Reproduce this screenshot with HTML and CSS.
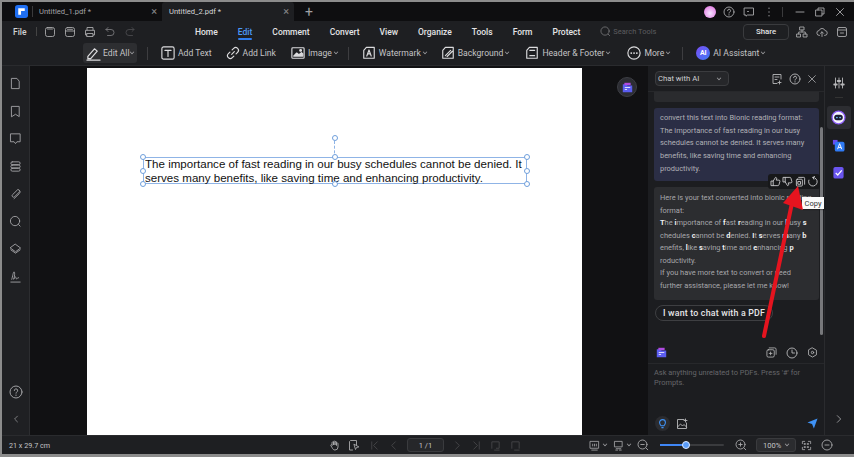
FILE: index.html
```html
<!DOCTYPE html>
<html lang="en">
<head>
<meta charset="utf-8">
<title>PDFelement</title>
<link rel="stylesheet" href="styles.css">
</head>
<body>
<div class="window">
  <header class="tabbar">
    <div class="logo"><svg viewBox="0 0 14 14" width="13" height="13"><rect width="14" height="14" rx="3" fill="#1f6ff2"/><path d="M3.5 3.5h7v3h-4v4h-3z" fill="#fff"/></svg></div>
    <div class="tab"><span class="tab-sep"></span><span class="tab-name">Untitled_1.pdf *</span><span class="tab-x">×</span></div>
    <div class="tab active"><span class="tab-name">Untitled_2.pdf *</span><span class="tab-x">×</span></div>
    <span class="plus">+</span>
    <div class="tab-right">
      <span class="avatar"></span>
      <svg class="ic" viewBox="0 0 12 12" width="12" height="12"><circle cx="6" cy="6" r="5"/><path d="M4.600 4.700a1.500 1.500 0 1 1 2 1.400c-.5.200-.6.500-.6 1M6 8.600v.5"/></svg>
      <svg class="ic" viewBox="0 0 12 12" width="12" height="12"><path d="M1.500 2h9v7h-6l-1.500 1.200V9h-1.500z"/><path d="M4.500 5.500h1"/></svg>
      <svg class="ic" viewBox="0 0 12 12" width="12" height="12"><path d="M6 2v.6M6 5.700v.6M6 9.400v.6"/></svg>
      <span class="win-sep"></span>
      <svg class="ic" viewBox="0 0 12 12" width="12" height="12"><path d="M2 6h8"/></svg>
      <svg class="ic" viewBox="0 0 12 12" width="12" height="12"><path d="M2 4h6v6H2zM4 4V2h6v6H8"/></svg>
      <svg class="ic" viewBox="0 0 12 12" width="12" height="12"><path d="M2.500 2.500l7 7M9.500 2.500l-7 7"/></svg>
    </div>
  </header>

  <nav class="menubar">
    <span class="file">File</span>
    <span class="menu-sep"></span>
    <div class="quick">
      <svg class="ic" viewBox="0 0 12 12" width="12" height="12"><rect x="1.500" y="1.500" width="9" height="9" rx="2"/><path d="M3.500 3h5"/></svg>
      <svg class="ic" viewBox="0 0 12 12" width="12" height="12"><rect x="1.500" y="1.500" width="9" height="9" rx="2"/><path d="M1.500 5h9" /><path d="M3.500 3.300h5" /></svg>
      <svg class="ic" viewBox="0 0 12 12" width="12" height="12"><path d="M3 4V1.500h6V4M3 9H1.500V4.300h9V9H9M3 7.500h6v3H3z"/></svg>
      <svg class="ic dim" viewBox="0 0 12 12" width="12" height="12"><path d="M4 1.500L2 3.500l2 2M2 3.500h5a2.800 2.800 0 0 1 0 6H3.500"/></svg>
      <svg class="ic dimmer" viewBox="0 0 12 12" width="12" height="12"><path d="M8 1.500l2 2-2 2M10 3.500H5a2.800 2.800 0 0 0 0 6h3.500"/></svg>
    </div>
    <div class="menu">
      <span>Home</span><span class="current">Edit</span><span>Comment</span><span>Convert</span><span>View</span><span>Organize</span><span>Tools</span><span>Form</span><span>Protect</span>
    </div>
    <div class="search"><svg class="ic dim" viewBox="0 0 12 12" width="11" height="11"><circle cx="5.500" cy="5.500" r="4.500"/><path d="M9 9l1.500 1.500"/></svg><span>Search Tools</span></div>
    <div class="menu-right">
      <span class="share">Share</span>
      <svg class="ic" viewBox="0 0 12 12" width="12" height="12"><rect x="4" y="1" width="4" height="3"/><rect x="1" y="8" width="3.500" height="3"/><rect x="7.500" y="8" width="3.500" height="3"/><path d="M6 4v2M2.700 8V6h6.600v2"/></svg>
      <svg class="ic" viewBox="0 0 12 12" width="12" height="12"><path d="M3.500 9.500a2.500 2.500 0 0 1-.3-5 3 3 0 0 1 5.700 0 2.500 2.500 0 0 1-.3 5M6 10.500V6M4.500 7.300L6 5.800l1.500 1.500"/></svg>
      <svg class="ic" viewBox="0 0 12 12" width="12" height="12"><rect x="1.500" y="1.500" width="9" height="9" rx="1.500"/><path d="M1.500 4h9M4.500 7h3"/></svg>
    </div>
  </nav>

  <div class="toolbar">
    <div class="tool editall">
      <svg class="tic" viewBox="0 0 16 16" width="15" height="15"><path d="M2 11l7-8 3 2.500-7 8H2zM1 15h14"/></svg>
      <span>Edit All</span><i class="caret"></i>
    </div>
    <span class="tsep s1"></span>
    <div class="tool t-text">
      <svg class="tic" viewBox="0 0 16 16" width="14" height="14"><rect x="1" y="1" width="14" height="14" rx="2"/><path d="M4.500 5h7M8 5v7"/></svg>
      <span>Add Text</span>
    </div>
    <div class="tool t-link">
      <svg class="tic" viewBox="0 0 16 16" width="14" height="14"><path d="M6.500 9.500l3-3M7 4.500l1.800-1.800a3 3 0 0 1 4.500 4.500L11.500 9M9 11.500l-1.800 1.800a3 3 0 0 1-4.500-4.500L4.500 7"/></svg>
      <span>Add Link</span>
    </div>
    <div class="tool t-img">
      <svg class="tic" viewBox="0 0 16 16" width="14" height="14"><rect x="1" y="2" width="14" height="12" rx="1"/><path d="M3 11.500l3.500-3.500 2.500 2 3-2.500 1.500 1.500v2.500z" fill="#d8d8da"/><circle cx="11" cy="5" r="1" fill="#d8d8da"/></svg>
      <span>Image</span><i class="caret"></i>
    </div>
    <span class="tsep s2"></span>
    <div class="tool t-wm">
      <svg class="tic" viewBox="0 0 16 16" width="14" height="14"><path d="M2 14V5l3-3.500h9V14zM5.500 11.500l2.500-7 2.500 7M6.500 9h3"/></svg>
      <span>Watermark</span><i class="caret"></i>
    </div>
    <div class="tool t-bg">
      <svg class="tic" viewBox="0 0 16 16" width="14" height="14"><path d="M2 14V5l3-3.500h9V14zM5 11l6-6M7 12l6-6"/></svg>
      <span>Background</span><i class="caret"></i>
    </div>
    <div class="tool t-hf">
      <svg class="tic" viewBox="0 0 16 16" width="14" height="14"><path d="M2 14V5l3-3.500h9V14zM5.500 5h5.500M5.500 11h5.500"/></svg>
      <span>Header &amp; Footer</span><i class="caret"></i>
    </div>
    <div class="tool t-more">
      <svg class="tic" viewBox="0 0 16 16" width="14" height="14"><circle cx="8" cy="8" r="7"/><path d="M4.800 8h.1M8 8h.1M11.200 8h.1" stroke-width="2"/></svg>
      <span>More</span><i class="caret"></i>
    </div>
    <span class="tsep s3"></span>
    <div class="tool t-ai">
      <span class="ai-badge">AI</span>
      <span>AI Assistant</span><i class="caret"></i>
    </div>
  </div>

  <main class="main">
    <aside class="sidebar">
      <div class="side-top">
        <svg class="sic" viewBox="0 0 14 14" width="13" height="13"><path d="M3 1.500h5.500l2.500 3v8H3z"/></svg>
        <svg class="sic" viewBox="0 0 14 14" width="13" height="13"><path d="M3 1.500h8v11l-4-2.500-4 2.500z"/></svg>
        <svg class="sic" viewBox="0 0 14 14" width="13" height="13"><path d="M2 2h10v8.500H8.500L7 12.500 5.500 10.500H2z"/></svg>
        <svg class="sic" viewBox="0 0 14 14" width="13" height="13"><rect x="2" y="2" width="10" height="3" rx="1.500"/><rect x="2" y="5.500" width="10" height="3" rx="1.500"/><rect x="2" y="9" width="10" height="3" rx="1.500"/></svg>
        <svg class="sic" viewBox="0 0 14 14" width="13" height="13"><path d="M11.500 5L6 10.500a1.500 1.500 0 0 1-2.200-2.200L9.500 2.700a2.600 2.600 0 0 1 1.500 4.500L5.500 12.500"/></svg>
        <svg class="sic" viewBox="0 0 14 14" width="13" height="13"><circle cx="6.500" cy="6.500" r="5"/><path d="M10.300 10.300l1.700 1.700"/></svg>
        <svg class="sic" viewBox="0 0 14 14" width="13" height="13"><path d="M7 2.500l5.500 4L7 10.500l-5.500-4zM2 8.500l5 3.500 5-3.500"/></svg>
        <svg class="sic" viewBox="0 0 14 14" width="13" height="13"><path d="M2 13h10M3 10c1-3 1.500-8 2.500-8s.5 6-.5 8c1-2 2-3 2.500-2s0 2 1 1.500 1-2 2-1"/></svg>
      </div>
      <div class="side-bottom">
        <svg class="sic" viewBox="0 0 14 14" width="14" height="14"><circle cx="7" cy="7" r="6"/><path d="M5.300 5.500a1.700 1.700 0 1 1 2.400 1.600c-.5.200-.7.500-.7 1.100M7 10v.5"/></svg>
        <svg class="sic" viewBox="0 0 14 14" width="10" height="10"><path d="M9 3L5 7l4 4"/></svg>
      </div>
    </aside>

    <section class="canvas">
      <div class="page">
        <div class="selection">
          <span class="stem"></span>
          <span class="h h-rot"></span>
          <span class="h h-tl"></span><span class="h h-tc"></span><span class="h h-tr"></span>
          <span class="h h-ml"></span><span class="h h-mr"></span>
          <span class="h h-bl"></span><span class="h h-bc"></span><span class="h h-br"></span>
          <p class="doc-text">The importance of fast reading in our busy schedules cannot be denied. It serves many benefits, like saving time and enhancing productivity.</p>
        </div>
      </div>
      <div class="float-btn"><svg viewBox="0 0 14 14" width="11" height="11"><path d="M1 3h5l1 1.500h6V13H1z" fill="#5b5df0"/><path d="M3 1h8v3H3z" fill="#b04be0"/><path d="M3.500 7h7M3.500 9.500h3" stroke="#fff" stroke-width="1"/></svg></div>
    </section>

    <section class="panel">
      <div class="panel-head">
        <div class="select"><span>Chat with AI</span><i class="caret"></i></div>
        <div class="head-icons">
          <svg class="pic" viewBox="0 0 12 12" width="12" height="12"><path d="M10 6V1.500H2v9h4M4 4h4M4 6.500h2M8.500 8v3M7 9.500h3"/></svg>
          <svg class="pic" viewBox="0 0 12 12" width="12" height="12"><circle cx="6" cy="6" r="5"/><path d="M4.600 4.700a1.500 1.500 0 1 1 2 1.400c-.5.200-.6.500-.6 1M6 8.600v.5"/></svg>
          <svg class="pic" viewBox="0 0 12 12" width="10" height="10"><path d="M2 2l8 8M10 2l-8 8"/></svg>
        </div>
      </div>
      <div class="chat">
        <div class="bubble stub"></div>
        <div class="bubble user">convert this text into Bionic reading format:<br>The importance of fast reading in our busy schedules cannot be denied. It serves many benefits, like saving time and enhancing productivity.</div>
        <div class="bubble reply">Here is your text converted into bionic reading format:<br><b>T</b>he <b>i</b>mportance of <b>f</b>ast <b>r</b>eading in our <b>b</b>usy <b>s</b><br>chedules <b>c</b>annot be <b>d</b>enied. <b>I</b>t <b>s</b>erves <b>m</b>any <b>b</b><br>enefits, <b>l</b>ike <b>s</b>aving <b>t</b>ime and <b>e</b>nhancing <b>p</b><br>roductivity.<br>If you have more text to convert or need further assistance, please let me know!</div>
        <div class="chip">I want to chat with a PDF</div>
        <div class="actions">
          <svg class="pic" viewBox="0 0 12 12" width="11" height="11"><path d="M1.500 5.500h2v5h-2zM3.500 5.500L6 1.500c1 0 1.500.8 1.200 1.700L6.800 4.500h3c.8 0 1.200.7 1 1.400l-1 3.600c-.2.600-.6 1-1.200 1H3.500"/></svg>
          <svg class="pic" viewBox="0 0 12 12" width="11" height="11"><path d="M1.500 6.500h2v-5h-2zM3.500 6.500L6 10.500c1 0 1.500-.8 1.200-1.700L6.800 7.500h3c.8 0 1.200-.7 1-1.400l-1-3.600c-.2-.6-.6-1-1.200-1H3.500"/></svg>
          <svg class="pic" viewBox="0 0 12 12" width="11" height="11"><rect x="1.500" y="3.500" width="6.500" height="7.500" rx="1"/><path d="M4 1.500h5.500a1 1 0 0 1 1 1V9"/><path d="M3.500 6h2.500v3H3.500z"/></svg>
          <svg class="pic" viewBox="0 0 12 12" width="11" height="11"><path d="M6.500 1.500A4.700 4.700 0 1 1 2 4.500M6.500 1.500L8.300.5M6.500 1.500l1 2"/></svg>
        </div>
        <span class="scrollbar"></span>
      </div>
      <div class="panel-tools">
        <svg viewBox="0 0 14 14" width="11" height="11"><path d="M1 3h5l1 1.500h6V13H1z" fill="#5b5df0"/><path d="M3 1h8v3H3z" fill="#b04be0"/><path d="M3.500 7h7M3.500 9.500h3" stroke="#fff" stroke-width="1"/></svg>
        <div class="ptools-right">
          <svg class="pic" viewBox="0 0 12 12" width="11" height="11"><rect x="1" y="3" width="8" height="8" rx="1.500"/><path d="M3.500 1h6a1.500 1.500 0 0 1 1.500 1.500V8M5 5.500v3M3.500 7h3"/></svg>
          <svg class="pic" viewBox="0 0 12 12" width="12" height="12"><circle cx="6" cy="6" r="5"/><path d="M6 3v3h2.500"/></svg>
          <svg class="pic" viewBox="0 0 12 12" width="11" height="11"><path d="M6 1l4.300 2.500v5L6 11 1.700 8.500v-5z"/><circle cx="6" cy="6" r="1.300"/></svg>
        </div>
      </div>
      <div class="composer">
        <p class="placeholder">Ask anything unrelated to PDFs. Press '#' for Prompts.</p>
        <div class="composer-foot">
          <span class="bulb"><svg viewBox="0 0 12 12" width="11" height="11" fill="none" stroke="#3f92f5" stroke-width="1.200"><path d="M4.500 8.500C3.500 7.500 2.800 6.600 2.800 5a3.200 3.200 0 0 1 6.400 0c0 1.600-.7 2.500-1.700 3.500zM4.800 10.500h2.400"/></svg></span>
          <svg class="pic" viewBox="0 0 12 12" width="12" height="12"><path d="M8 1.500H1.500v9h9V5M1.500 9l3-3 2 2 1.500-1.500 2.500 2.500"/><path d="M9.500 1v3M8 2.500h3"/></svg>
          <svg class="send" viewBox="0 0 12 12" width="11" height="11"><path d="M11.500.5L7.500 11.500 5.500 6.500.5 5z" fill="#3f92f5"/></svg>
        </div>
      </div>
    </section>

    <aside class="rail">
      <svg class="pic rail-set" viewBox="0 0 12 12" width="12" height="12"><path d="M2.500 1v10M6 1v10M9.500 1v10"/><path d="M1.200 7.500h2.600M4.700 4h2.600M8.200 7.500h2.600" stroke-width="1.800"/></svg>
      <span class="rail-line"></span>
      <span class="rail-bot"><svg viewBox="0 0 14 14" width="15" height="15"><circle cx="7" cy="7" r="6" fill="#f5f3ff" stroke="#8a5cf5" stroke-width="1.200"/><rect x="3" y="4.500" width="8" height="5" rx="2.500" fill="#1c1c30"/><circle cx="5.500" cy="7" r=".8" fill="#6fc3ff"/><circle cx="8.500" cy="7" r=".8" fill="#6fc3ff"/></svg></span>
      <svg class="rail-app" viewBox="0 0 14 14" width="13" height="13"><path d="M1 1h5v5H1z" fill="#6a4df0"/><rect x="3" y="3" width="10.500" height="10.500" rx="2" fill="#2f7bf5"/><path d="M6 11l2.200-6L10.500 11M6.800 9.200h3" stroke="#fff" fill="none" stroke-width="1"/></svg>
      <svg class="rail-app" viewBox="0 0 14 14" width="13" height="13"><rect x="1.500" y="1" width="11" height="12.500" rx="2" fill="#6a55f0"/><path d="M4 7.500l2.200 2.200L10.500 4.800" stroke="#fff" fill="none" stroke-width="1.300"/></svg>
      <svg class="pic rail-chev" viewBox="0 0 12 12" width="10" height="10"><path d="M4 2l4 4-4 4"/></svg>
    </aside>

    <div class="tooltip">Copy</div>
    <svg class="arrow" viewBox="0 0 854 457" width="854" height="457"><path d="M764 336L792 203" stroke="#e5141f" stroke-width="4" stroke-linecap="round"/><path d="M798 186L783 203 803 210z" fill="#e5141f"/></svg>
  </main>

  <footer class="status">
    <span class="size">21 x 29.7 cm</span>
    <div class="s-center">
      <svg class="ic s-hand" viewBox="0 0 12 12" width="12" height="12"><path d="M3 6V3.500a.8.800 0 0 1 1.500 0V6 2.500a.8.800 0 0 1 1.500 0V6 3a.8.800 0 0 1 1.500 0v3.500-2a.8.800 0 0 1 1.500 0V8a3 3 0 0 1-3 3H6c-1.500 0-2-.7-3-2.500L1.800 6.500c-.3-.8.700-1.300 1.200-.5z"/></svg>
      <svg class="ic s-sel" viewBox="0 0 12 12" width="12" height="12"><path d="M8.500 6V1.500h-6l-1 1V11h3M6 5.500l1.500 5 1-2 2-.5z"/></svg>
      <svg class="ic dimmer s-first" viewBox="0 0 12 12" width="11" height="11"><path d="M3 2v8M9 2L5 6l4 4"/></svg>
      <svg class="ic dimmer s-prev" viewBox="0 0 12 12" width="11" height="11"><path d="M8 2L4 6l4 4"/></svg>
      <span class="pagebox">1 /1</span>
      <svg class="ic dimmer s-next" viewBox="0 0 12 12" width="11" height="11"><path d="M4 2l4 4-4 4"/></svg>
      <svg class="ic dimmer s-last" viewBox="0 0 12 12" width="11" height="11"><path d="M9 2v8M3 2l4 4-4 4"/></svg>
      <svg class="ic dimmer s-up" viewBox="0 0 12 12" width="11" height="11"><path d="M2 9V2h8v7H7"/><path d="M5 11h5"/></svg>
      <svg class="ic dimmer s-down" viewBox="0 0 12 12" width="11" height="11"><path d="M2 9V2h8v7M5 11h5"/></svg>
    </div>
    <div class="s-right">
      <svg class="ic" viewBox="0 0 12 12" width="11" height="11"><rect x="1.500" y="1.500" width="9" height="7.500"/><path d="M4 4.500v2M6 4.500v2M8 4.500v2M3 11h6"/></svg><i class="caret s-c1"></i>
      <svg class="ic s-book" viewBox="0 0 12 12" width="11" height="11"><rect x="2" y="1.500" width="8" height="6"/><path d="M3.500 9.500h5M3 11h2M7 11h2"/></svg><i class="caret s-c1"></i>
      <svg class="ic s-zo" viewBox="0 0 12 12" width="12" height="12"><circle cx="5.500" cy="5.500" r="4.500"/><path d="M9 9l1.800 1.800M3.800 5.500h3.400"/></svg>
      <div class="slider"><span class="fill"></span><span class="knob"></span></div>
      <svg class="ic s-zi" viewBox="0 0 12 12" width="12" height="12"><circle cx="5.500" cy="5.500" r="4.500"/><path d="M9 9l1.800 1.800M3.800 5.500h3.400M5.500 3.800v3.400"/></svg>
      <div class="zoombox"><span>100%</span><i class="caret"></i></div>
      <svg class="ic s-fit" viewBox="0 0 12 12" width="11" height="11"><path d="M1.500 4V1.500H4M8 1.500h2.500V4M10.500 8v2.500H8M4 10.500H1.500V8M3.800 3.800h1v1h-1zM7.200 3.800h1v1h-1zM3.800 7.200h1v1h-1zM7.200 7.200h1v1h-1z"/></svg>
      <svg class="ic s-min" viewBox="0 0 12 12" width="12" height="12"><circle cx="6" cy="6" r="5"/><path d="M4 6h4"/></svg>
    </div>
  </footer>
</div>
</body>
</html>
```
FILE: styles.css
```css
* { box-sizing: border-box; }
html, body { margin: 0; padding: 0; width: 854px; height: 457px; overflow: hidden; background: #8c8c8c; }
body { padding: 2px 0 3px 2px; font-family: Roboto, "Noto Sans", sans-serif; color: #d8d8da; }
svg { flex: none; display: block; }
.ic, .tic, .sic, .pic { fill: none; stroke-linecap: round; stroke-linejoin: round; }
.ic { stroke: #a8a8aa; stroke-width: .9; }
.ic.dim { stroke: #77777a; }
.ic.dimmer { stroke: #4a4a4d; }
.tic { stroke: #dcdcde; stroke-width: 1.300; }
.sic { stroke: #a0a0a3; stroke-width: 1; }
.pic { stroke: #b8b8ba; stroke-width: .9; }
.caret { display: inline-block; flex: none; width: 4px; height: 4px; border-right: 1px solid #a0a0a3; border-bottom: 1px solid #a0a0a3; transform: rotate(45deg) scale(.8); margin: -2px 0 0 -1px; }

.window { width: 852px; height: 452px; display: flex; flex-direction: column; background: #1e1f22; position: relative; }

.tabbar { height: 19px; flex: none; background: #0e0e10; display: flex; align-items: center; padding-left: 13px; }
.logo { width: 15px; }
.tab { width: 132px; height: 19px; display: flex; align-items: center; font-size: 7.600px; color: #a3a3a6; position: relative; padding-left: 9px; }
.tab-sep { width: 1px; height: 11px; background: #3a3a3c; position: absolute; left: 2px; top: 4px; }
.tab.active { background: #1e1f22; color: #d6d6d8; padding-left: 7px; border-radius: 3px 3px 0 0; }
.tab-name { flex: 1; }
.tab-x { font-size: 11px; color: #88888a; margin-right: 5px; line-height: 1; }
.plus { font-size: 14px; color: #a0a0a3; margin-left: 11px; line-height: 1; }
.tab-right { margin-left: auto; display: flex; align-items: center; gap: 8px; padding-right: 8px; }
.avatar { width: 12px; height: 12px; border-radius: 50%; background: radial-gradient(circle at 50% 60%, #f3e6ff, #e78be8 70%); margin-right: -1px; }
.win-sep { width: 1px; height: 10px; background: #3a3a3c; margin: 0 3px 0 -1px; }

.menubar { height: 21px; flex: none; display: flex; align-items: center; font-size: 8.500px; padding-left: 11px; font-weight: 500; }
.file { width: 23px; color: #d0d0d2; }
.menu-sep { width: 1px; height: 9px; background: #444; margin-right: 7px; }
.quick { display: flex; gap: 8px; width: 151px; }
.menu { display: flex; gap: 20px; color: #e4e4e6; font-weight: 500; font-size: 8.500px; }
.menu .current { color: #4d9bf7; position: relative; }
.menu .current::after { content: ""; position: absolute; left: 0; right: 0; bottom: -3px; height: 2px; background: #2f7df0; border-radius: 1px; }
.search { display: flex; align-items: center; gap: 2px; margin-left: 20px; color: #5c5c5f; font-size: 7.500px; font-weight: 400; }
.menu-right { margin-left: auto; display: flex; align-items: center; gap: 8px; padding-right: 6px; }
.share { width: 46px; height: 16px; border: 1px solid #3a3b3e; border-radius: 4px; display: flex; align-items: center; justify-content: center; font-size: 7.800px; font-weight: 500; color: #e4e4e6; margin-right: -1px; }

.toolbar { height: 24px; flex: none; display: flex; align-items: center; font-size: 8.600px; color: #c4c4c6; padding-bottom: 1px; border-bottom: 1px solid #2a2b2e; }
.tool { display: flex; align-items: center; gap: 3px; white-space: nowrap; }
.editall { margin-left: 81px; width: 54px; height: 20px; background: #2d2e31; border-radius: 3px; padding-left: 3px; gap: 2px; }
.tsep { width: 1px; height: 13px; background: #3d3d40; }
.s1 { margin-left: 10px; }
.t-text { margin-left: 13px; }
.t-link { margin-left: 14px; }
.t-img { margin-left: 15px; }
.s2 { margin-left: 10px; }
.t-wm { margin-left: 13px; }
.t-bg { margin-left: 14px; }
.t-hf { margin-left: 16px; }
.t-more { margin-left: 17px; }
.s3 { margin-left: 12px; }
.t-ai { margin-left: 13px; }
.ai-badge { width: 14px; height: 14px; border-radius: 50%; background: linear-gradient(135deg, #7a4df5, #3f7bf5); color: #fff; font-size: 7px; font-weight: 700; display: flex; align-items: center; justify-content: center; }

.main { flex: 1; display: flex; min-height: 0; position: relative; }
.sidebar { width: 28px; flex: none; background: #1f2023; border-right: 1px solid #2c2d30; display: flex; flex-direction: column; justify-content: space-between; align-items: center; padding: 11px 0 11px; }
.side-top { display: flex; flex-direction: column; gap: 14.500px; }
.side-bottom { display: flex; flex-direction: column; gap: 15px; align-items: center; }

.canvas { flex: 1; background: #111113; display: flex; position: relative; padding: 2px 0 0 57px; }
.page { width: 495px; height: 100%; background: #fff; position: relative; }
.selection { position: absolute; left: 56px; top: 89px; width: 384px; height: 27px; border: 1px solid #8fb4e6; }
.doc-text { margin: -1px 0 0; padding: 0 0 0 1px; font: 11.570px/14px "Liberation Sans", Arial, sans-serif; color: #111; width: 383px; }
.h { position: absolute; width: 6px; height: 6px; border-radius: 50%; background: #fff; border: 1px solid #6f9fdc; z-index: 1; }
.h-rot { left: 188px; top: -23px; }
.stem { position: absolute; left: 190px; top: -17px; height: 17px; border-left: 1px dashed #8fb4e6; }
.h-tl { left: -4px; top: -4px; }
.h-tc { left: 188px; top: -4px; }
.h-tr { right: -4px; top: -4px; }
.h-ml { left: -4px; top: 10px; }
.h-mr { right: -4px; top: 10px; }
.h-bl { left: -4px; bottom: -4px; }
.h-bc { left: 188px; bottom: -4px; }
.h-br { right: -4px; bottom: -4px; }
.float-btn { position: absolute; left: 587px; top: 11px; width: 20px; height: 20px; border-radius: 50%; background: #2c2d33; border: 1px solid #3d3e44; display: flex; align-items: center; justify-content: center; }

.panel { width: 176px; flex: none; background: #1c1d20; display: flex; flex-direction: column; position: relative; }
.panel-head { height: 26px; flex: none; display: flex; align-items: center; padding-left: 7px; border-bottom: 1px solid #27282b; }
.select { width: 74px; height: 15px; border: 1px solid #3b3c3f; background: #26272a; border-radius: 4px; display: flex; align-items: center; justify-content: space-between; padding: 0 7px 0 2px; font-size: 7.700px; color: #d0d0d2; }
.head-icons { display: flex; align-items: center; gap: 6px; margin-left: 42px; }
.chat { flex: 1; padding: 0 5px 0 6px; position: relative; min-height: 0; overflow: visible; font-size: 7.450px; color: #b0b0b6; line-height: 12.700px; }
.bubble { width: 165px; border-radius: 3px; }
.stub { height: 10px; background: #2a2b2e; border-radius: 0 0 3px 3px; margin-bottom: 6px; }
.user { height: 73px; background: #2b2e45; padding: 4px 6px; margin-bottom: 6px; }
.reply { height: 113px; background: #2c2d30; padding: 5px 6px; color: #a6a6aa; line-height: 12.500px; }
.reply b { color: #f0f0f2; font-weight: 700; }
.chip { width: 118px; height: 16px; margin: 5px 0 0 1px; border: 1px solid #3e3f42; border-radius: 8px; display: flex; align-items: center; justify-content: center; font-size: 8.800px; font-weight: 500; color: #e6e6e8; letter-spacing: .2px; }
.actions { position: absolute; left: 120px; top: 82px; width: 52px; height: 15px; background: #17181a; border-radius: 3px; display: flex; align-items: center; justify-content: space-around; padding: 0 1px; }
.actions .pic { stroke: #d8d8da; }
.scrollbar { position: absolute; left: 172px; top: 35px; width: 3px; height: 208px; background: #77787b; border-radius: 2px; }
.panel-tools { height: 28px; flex: none; display: flex; align-items: center; padding: 6px 6px 0 8px; border-bottom: 1px solid #27282b; }
.ptools-right { margin-left: auto; display: flex; align-items: center; gap: 9px; }
.composer { height: 71px; flex: none; display: flex; flex-direction: column; padding: 4px 6px 4px 7px; }
.placeholder { margin: 0 0 0 -1px; font-size: 7.450px; line-height: 9.500px; color: #66666a; }
.composer-foot { margin-top: auto; display: flex; align-items: center; gap: 6px; }
.bulb { width: 15px; height: 15px; border-radius: 50%; background: #2b2c30; display: flex; align-items: center; justify-content: center; }
.send { margin-left: auto; margin-right: 0; }

.rail { width: 30px; flex: none; background: #1c1d20; border-left: 1px solid #2a2b2e; display: flex; flex-direction: column; align-items: center; padding: 11px 2px 0 0; }
.rail-line { width: 8px; height: 1px; background: #333; margin-top: 8px; }
.rail-bot { width: 24px; height: 23px; background: #2c2d31; border-radius: 3px; display: flex; align-items: center; justify-content: center; margin-top: 8px; }
.rail-app { margin-top: 10px; }
.rail-app + .rail-app { margin-top: 14px; }
.rail-chev { margin-top: auto; margin-bottom: 11px; }

.tooltip { position: absolute; left: 800px; top: 131px; width: 22px; height: 12px; background: #fafafa; color: #333; font-size: 7.500px; display: flex; align-items: center; justify-content: center; z-index: 3; box-shadow: 1px 1px 1px rgba(0,0,0,.3); }
.arrow { position: absolute; left: -2px; top: -66px; z-index: 4; pointer-events: none; }

.status { height: 19px; flex: none; display: flex; align-items: center; font-size: 7.200px; color: #c4c4c6; padding-left: 7px; position: relative; border-top: 1px solid #2a2b2e; }
.size { width: 320px; }
.s-center { display: flex; align-items: center; }
.s-sel { margin-left: 7px; }
.s-first { margin-left: 9px; }
.s-prev { margin-left: 8px; }
.pagebox { width: 37px; height: 14px; margin-left: 8px; border: 1px solid #3a3b3e; background: #26272a; border-radius: 3px; display: flex; align-items: center; justify-content: center; font-size: 7.500px; }
.s-next { margin-left: 8px; }
.s-last { margin-left: 8px; }
.s-up { margin-left: 8px; }
.s-down { margin-left: 9px; }
.s-right { display: flex; align-items: center; margin-left: 68px; }
.s-c1 { margin-left: 3px; }
.s-book { margin-left: 6px; }
.s-zo { margin-left: 6px; }
.slider { width: 64px; height: 2px; background: #3a3b3e; margin-left: 11px; position: relative; border-radius: 1px; }
.fill { position: absolute; left: 0; top: 0; width: 26px; height: 2px; background: #3f86f5; }
.knob { position: absolute; left: 22px; top: -3px; width: 8px; height: 8px; border-radius: 50%; background: #5a9cf8; border: 1.500px solid #dce9ff; }
.s-zi { margin-left: 11px; }
.zoombox { width: 40px; height: 14px; margin-left: 9px; background: #2b2c2f; border: 1px solid #3a3b3e; border-radius: 3px; display: flex; align-items: center; justify-content: space-between; padding: 0 6px 0 6px; font-size: 7.500px; }
.s-fit { margin-left: 5px; }
.s-min { margin-left: 9px; }
```
